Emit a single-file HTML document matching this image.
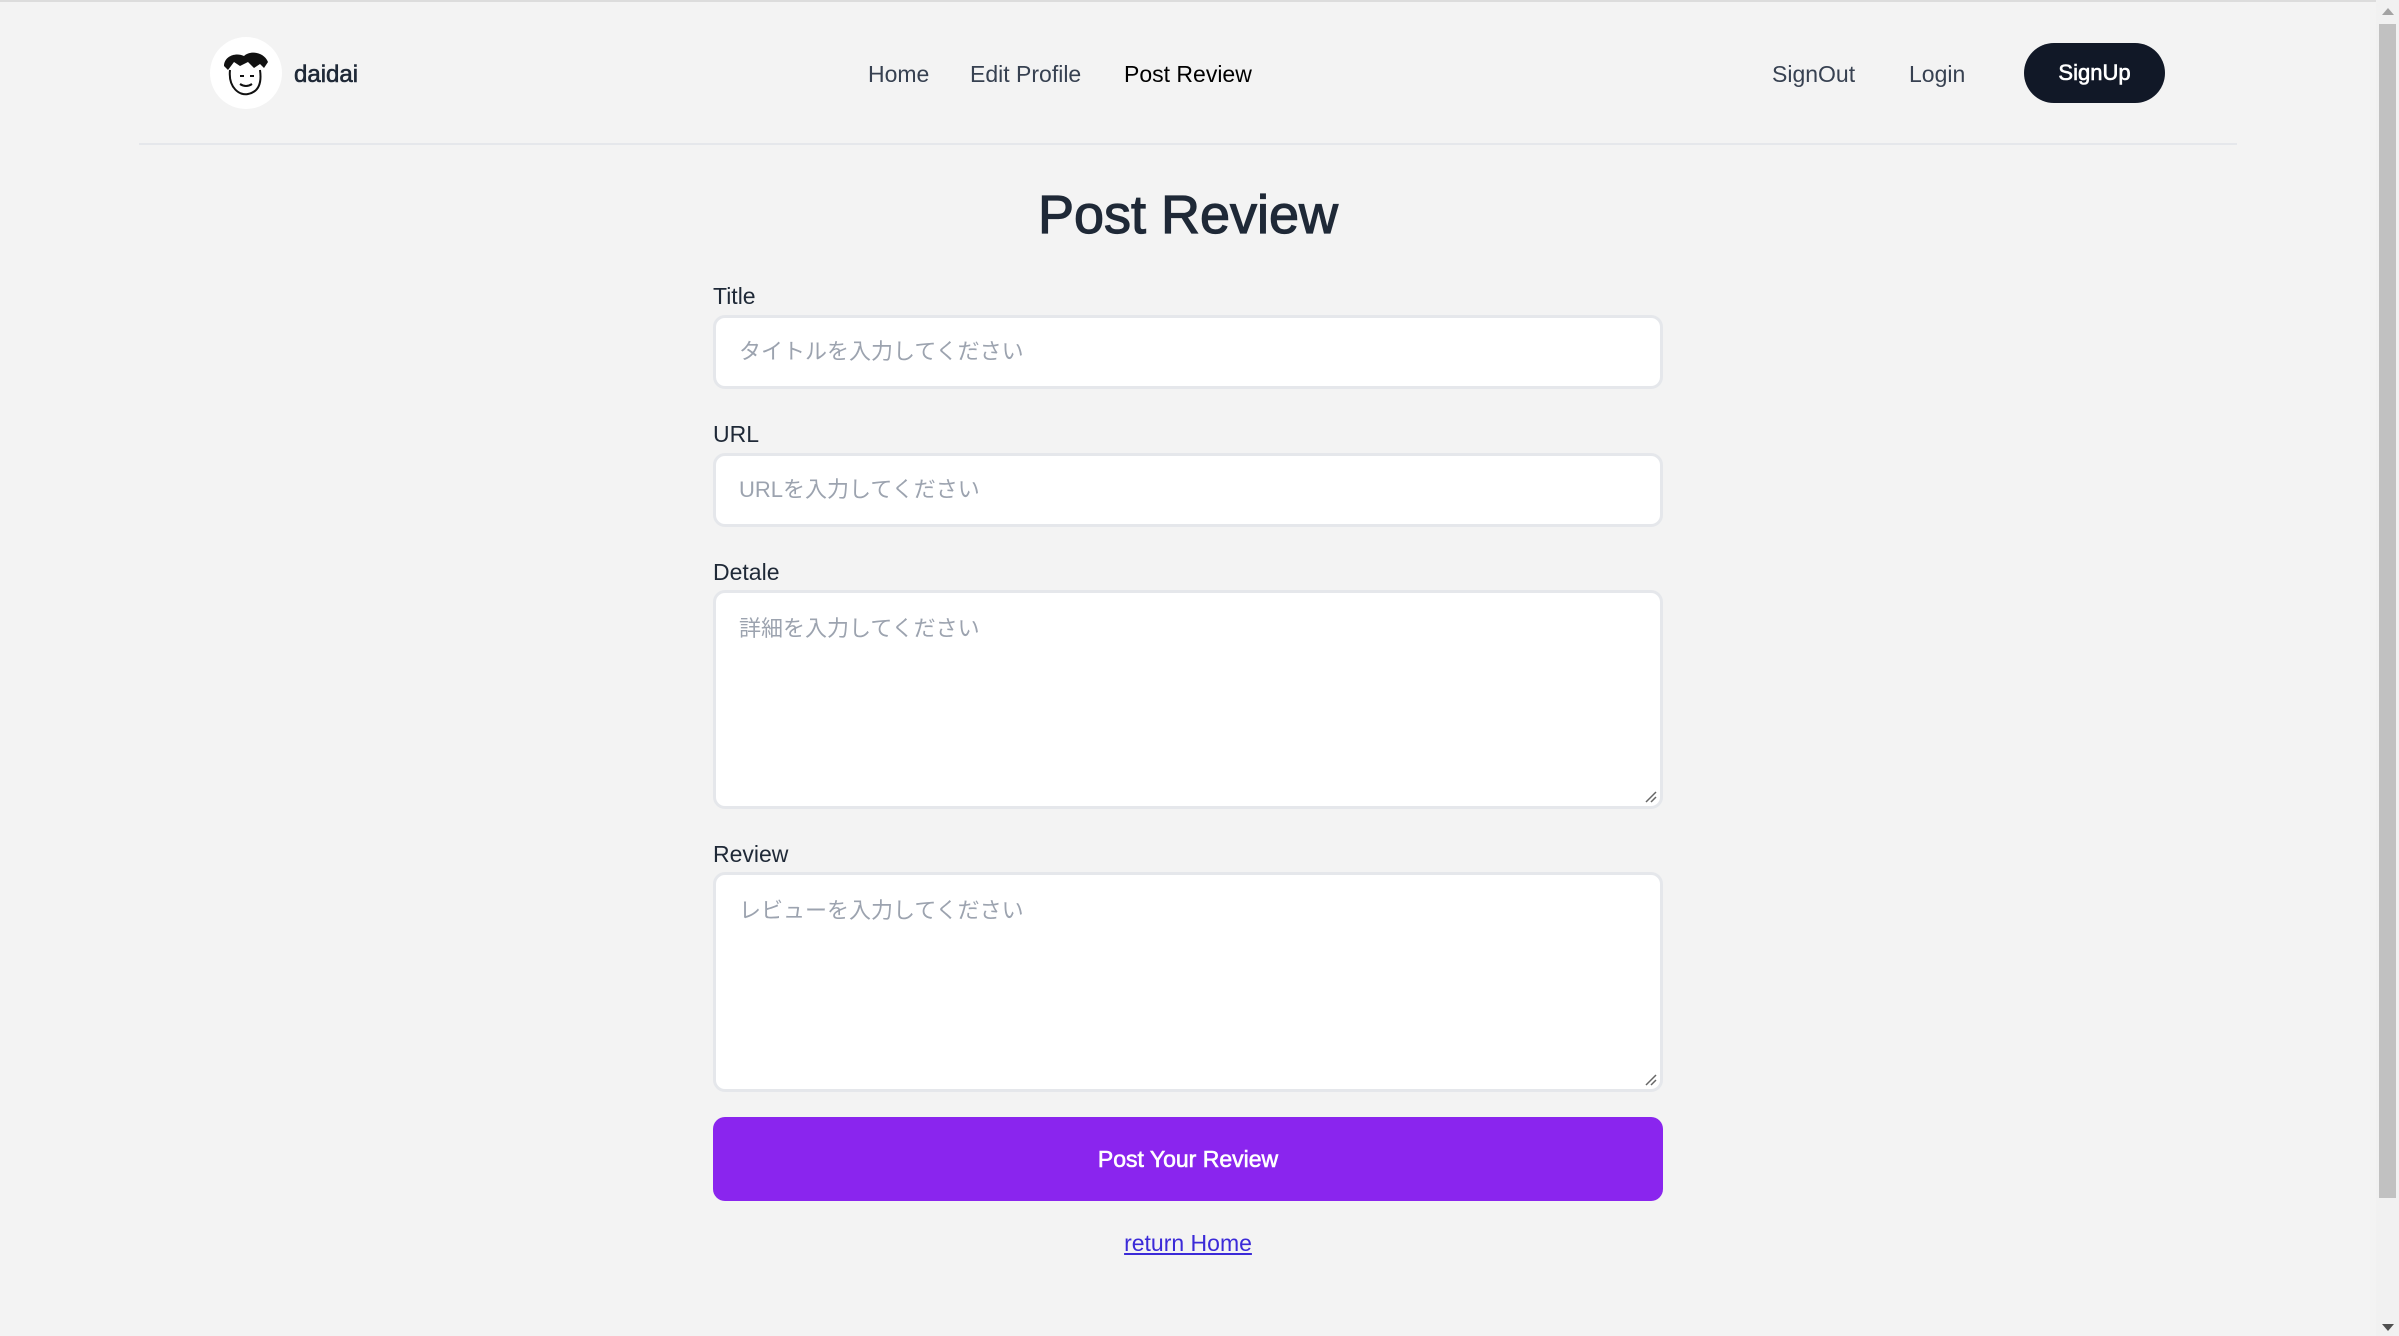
<!DOCTYPE html>
<html><head><meta charset="utf-8"><style>
*{margin:0;padding:0;box-sizing:border-box}
body{width:2399px;height:1336px;background:#f3f3f3;font-family:"Liberation Sans","Noto Sans CJK JP",sans-serif;position:relative;overflow:hidden;color:#1f2937}
.abs{position:absolute}
.top{left:0;top:0;width:2376px;height:2px;background:#dcdcdc}
.nav{font-size:23px;color:#374151;top:60px;line-height:28px}
.hl{left:139px;top:143px;width:2098px;height:2px;background:#e5e7eb}
.lbl{left:713px;font-size:23px;color:#1f2937;line-height:28px}
.inp{left:713px;width:950px;background:#fff;border:3px solid #e5e7eb;border-radius:12px;font-size:22px;color:#9ca3af;padding-left:23px}
</style></head><body>
<div class="abs top"></div>
<div class="abs" style="left:210px;top:37px;width:72px;height:72px;border-radius:50%;background:#fff"></div>
<svg class="abs" style="left:218px;top:48px" width="56" height="52" viewBox="0 0 56 52"><path d="M6 18 C6 8 18 4 26 8 C32 2 46 4 50 14 L46 20 L42 16 L36 20 L30 14 L22 18 L16 14 L10 22 Z" fill="#111"/><path d="M12 22 C10 40 22 48 30 46 C40 44 44 36 42 22" fill="none" stroke="#111" stroke-width="2"/><path d="M22 36 Q28 40 34 36 M22 28 h4 M32 28 h4" stroke="#111" stroke-width="2" fill="none"/></svg>
<div class="abs" style="left:294px;top:61px;font-size:24px;-webkit-text-stroke:0.6px #1f2937;color:#1f2937">daidai</div>
<div class="abs nav" style="left:868px">Home</div>
<div class="abs nav" style="left:970px">Edit Profile</div>
<div class="abs nav" style="left:1124px;color:#000">Post Review</div>
<div class="abs nav" style="left:1772px">SignOut</div>
<div class="abs nav" style="left:1909px">Login</div>
<div class="abs" style="left:2024px;top:43px;width:141px;height:60px;border-radius:30px;background:#111827;color:#fff;font-size:22px;-webkit-text-stroke:0.6px #fff;text-align:center;line-height:60px">SignUp</div>
<div class="abs hl"></div>
<div class="abs" style="left:0;width:2376px;top:182px;text-align:center;font-size:54px;-webkit-text-stroke:1.2px #1f2937;color:#1f2937;line-height:66px">Post Review</div>
<div class="abs lbl" style="top:282px">Title</div>
<div class="abs inp" style="top:315px;height:74px;line-height:68px">タイトルを入力してください</div>
<div class="abs lbl" style="top:420px">URL</div>
<div class="abs inp" style="top:453px;height:74px;line-height:68px">URLを入力してください</div>
<div class="abs lbl" style="top:558px">Detale</div>
<div class="abs inp" style="top:590px;height:219px;padding-top:22px;line-height:28px">詳細を入力してください</div>
<div class="abs lbl" style="top:840px">Review</div>
<div class="abs inp" style="top:872px;height:220px;padding-top:22px;line-height:28px">レビューを入力してください</div>
<svg class="abs" style="left:1644px;top:790px" width="14" height="14"><path d="M2 12 L12 2 M7 12 L12 7" stroke="#666" stroke-width="1.5"/></svg>
<svg class="abs" style="left:1644px;top:1073px" width="14" height="14"><path d="M2 12 L12 2 M7 12 L12 7" stroke="#666" stroke-width="1.5"/></svg>
<div class="abs" style="left:713px;top:1117px;width:950px;height:84px;border-radius:12px;background:#8a25ee;color:#fff;font-size:23px;-webkit-text-stroke:0.6px #fff;text-align:center;line-height:84px">Post Your Review</div>
<div class="abs" style="left:0;width:2376px;top:1230px;text-align:center;font-size:23px;color:#3b2ad8;text-decoration:underline">return Home</div>
<div class="abs" style="left:2376px;top:0;width:23px;height:1336px;background:#f1f1f1"></div>
<div class="abs" style="left:2379px;top:24px;width:17px;height:1174px;background:#c1c1c1"></div>
<div class="abs" style="left:2382px;top:8px;width:0;height:0;border-left:6px solid transparent;border-right:6px solid transparent;border-bottom:7px solid #a3a3a3"></div>
<div class="abs" style="left:2382px;top:1324px;width:0;height:0;border-left:6px solid transparent;border-right:6px solid transparent;border-top:7px solid #505050"></div>
</body></html>
